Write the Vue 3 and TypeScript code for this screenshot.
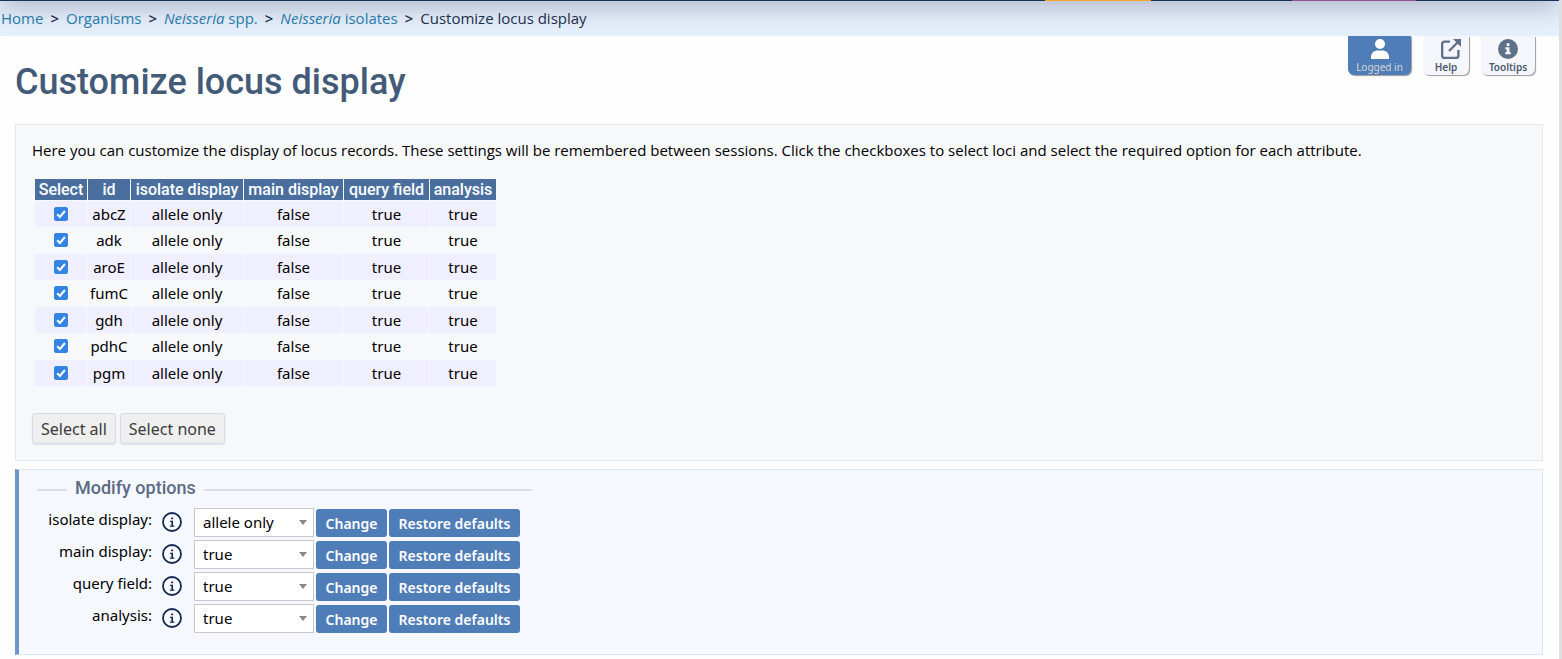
<script setup lang="ts">
import { reactive, ref } from 'vue'

interface Locus {
  id: string
  selected: boolean
}

interface DisplayOption {
  key: string
  label: string
  value: string
  choices: string[]
}

const columns = ['Select', 'id', 'isolate display', 'main display', 'query field', 'analysis']
const attributes = ['allele only', 'false', 'true', 'true']

const loci = ref<Locus[]>(
  ['abcZ', 'adk', 'aroE', 'fumC', 'gdh', 'pdhC', 'pgm'].map((id) => ({ id, selected: true })),
)

const options = reactive<DisplayOption[]>([
  { key: 'isolate_display', label: 'isolate display:', value: 'allele only', choices: ['allele only', 'sequence', 'hide'] },
  { key: 'main_display', label: 'main display:', value: 'true', choices: ['true', 'false'] },
  { key: 'query_field', label: 'query field:', value: 'true', choices: ['true', 'false'] },
  { key: 'analysis', label: 'analysis:', value: 'true', choices: ['true', 'false'] },
])

function selectAll(selected: boolean) {
  loci.value.forEach((locus) => (locus.selected = selected))
}
</script>

<template>
  <div class="page">
    <div class="menu-edge"></div>
    <nav class="breadcrumbs" aria-label="Breadcrumb">
      <a href="#">Home</a><span class="sep">&gt;</span>
      <a href="#">Organisms</a><span class="sep">&gt;</span>
      <a href="#"><i>Neisseria</i> spp.</a><span class="sep">&gt;</span>
      <a href="#"><i>Neisseria</i> isolates</a><span class="sep">&gt;</span>
      <span>Customize locus display</span>
    </nav>

    <header class="title-row">
      <h1>Customize locus display</h1>
      <div class="tools">
        <button type="button" class="tool tool-login">
          <svg viewBox="0 0 18 20" width="18" height="20">
            <circle cx="9" cy="5" r="5" fill="currentColor" />
            <path d="M0 20v-2c0-4 3-6.500 6.500-6.500h5c3.500 0 6.500 2.500 6.500 6.500v2z" fill="currentColor" />
          </svg>
          <span>Logged in</span>
        </button>
        <button type="button" class="tool tool-help">
          <svg viewBox="0 0 20 20" width="20" height="20" fill="none" stroke="currentColor" stroke-width="2.400">
            <path d="M9 2.600H3.600a2.500 2.500 0 0 0-2.500 2.500v11.300a2.500 2.500 0 0 0 2.500 2.500h11.300a2.500 2.500 0 0 0 2.500-2.500V11" />
            <path d="M8 12 17.500 2.500" />
            <path d="M12 0h8v8z" fill="currentColor" stroke="none" />
          </svg>
          <span>Help</span>
        </button>
        <button type="button" class="tool tool-tips">
          <svg viewBox="0 0 20 20" width="20" height="20">
            <circle cx="10" cy="10" r="10" fill="currentColor" />
            <path d="M8.600 4.200h2.900v2.700H8.600zM7.400 8.200h4.100v5h1.300v2H7.200v-2h1.400v-3H7.400z" fill="#f4f6fb" />
          </svg>
          <span>Tooltips</span>
        </button>
      </div>
    </header>

    <main>
      <section class="panel results">
        <p>
          Here you can customize the display of locus records. These settings will be remembered between sessions.
          Click the checkboxes to select loci and select the required option for each attribute.
        </p>
        <table>
          <thead>
            <tr>
              <th v-for="column in columns" :key="column" scope="col">{{ column }}</th>
            </tr>
          </thead>
          <tbody>
            <tr v-for="locus in loci" :key="locus.id">
              <td>
                <span class="check">
                  <input v-model="locus.selected" type="checkbox" :aria-label="locus.id" />
                  <svg v-if="locus.selected" viewBox="0 0 14 14" width="14" height="14" aria-hidden="true">
                    <path d="M3.200 7.200 5.900 9.900 10.900 4" fill="none" stroke="#fff" stroke-width="2" />
                  </svg>
                </span>
              </td>
              <td>{{ locus.id }}</td>
              <td v-for="(attribute, i) in attributes" :key="i">{{ attribute }}</td>
            </tr>
          </tbody>
        </table>
        <div class="selectors">
          <button type="button" @click="selectAll(true)">Select all</button>
          <button type="button" @click="selectAll(false)">Select none</button>
        </div>
      </section>

      <section class="panel modify">
        <fieldset>
          <legend>Modify options</legend>
          <div v-for="option in options" :key="option.key" class="option">
            <label :for="option.key">{{ option.label }}</label>
            <button type="button" class="info" :aria-label="`About ${option.label}`">
              <svg viewBox="0 0 20 20" width="20" height="20">
                <circle cx="10" cy="10" r="9" fill="none" stroke="currentColor" stroke-width="1.800" />
                <path d="M9.200 5.400h1.900v1.900H9.200zM8 8.800h3v4.800h1.300v1.100H7.900v-1.100h1.500V9.900H8z" fill="currentColor" />
              </svg>
            </button>
            <span class="dropdown">
              <select :id="option.key" v-model="option.value">
                <option v-for="choice in option.choices" :key="choice">{{ choice }}</option>
              </select>
              <svg viewBox="0 0 8 5" width="8" height="5" aria-hidden="true"><path d="M0 0h8L4 5z" fill="#888" /></svg>
            </span>
            <button type="button" class="action change">Change</button>
            <button type="button" class="action restore">Restore defaults</button>
          </div>
        </fieldset>
      </section>
    </main>
  </div>
</template>

<style>
body {
  margin: 0;
  background: #fefefe;
}
</style>

<style scoped>
.page {
  box-sizing: border-box;
  min-height: 100vh;
  border-right: 3px solid #dedede;
  color: #000;
  font: 15px/24px "Noto Sans", sans-serif;
}

button,
select {
  box-sizing: border-box;
  margin: 0;
  font-family: inherit;
  cursor: pointer;
}

.menu-edge {
  height: 1px;
  background: linear-gradient(
    to right,
    #17325c 67%,
    #f5a623 67% 73.8%,
    #17325c 73.8% 82.9%,
    #96509b 82.9% 90.8%,
    #17325c 90.8%
  );
}

.breadcrumbs {
  position: relative;
  z-index: 0;
  display: flex;
  height: 33px;
  padding: 0 0 2px 1px;
  align-items: center;
  overflow: hidden;
  background: #e6f0fc;
  color: #1c2f4c;
  font-family: "Open Sans", sans-serif;
  font-size: 15px;
  white-space: nowrap;
}

/* Shadow cast by the menu bar above */
.breadcrumbs::before {
  position: absolute;
  z-index: -1;
  top: -60px;
  right: 0;
  left: 0;
  height: 60px;
  box-shadow: 0 8px 24px rgb(40 40 70 / 26%);
  content: "";
}

.breadcrumbs a {
  color: #267aa9;
  text-decoration: none;
}

.sep {
  margin: 0 7px;
  font-weight: 600;
}

.title-row {
  display: flex;
  height: 88px;
  padding: 0 24px 0 15px;
  align-items: flex-start;
  justify-content: space-between;
}

h1 {
  margin: 22px 0 0;
  color: #435a78;
  font: 500 36px/48px Roboto, sans-serif;
}

.tools {
  display: flex;
  gap: 12px;
}

.tool {
  display: flex;
  height: 39px;
  padding: 3px 0 0;
  flex-direction: column;
  align-items: center;
  border: 0;
  border-radius: 0 0 6px 6px;
  background: #f4f6fb;
  box-shadow: 1px 1px 1px #999;
  color: #5f7089;
  font-size: 10px;
  line-height: 16px;
}

.tool svg {
  flex: none;
}

.tool span {
  color: #4a5870;
  font-weight: 600;
}

.tool-login {
  width: 63px;
  background: #4e7db8;
  color: #fff;
}

.tool-login span {
  color: #d5d5d5;
  font-weight: 400;
}

.tool-help {
  width: 46px;
}

.tool-help svg {
  margin-left: 10px;
}

.tool-tips {
  width: 54px;
}

main {
  display: flex;
  padding: 0 16px 0 15px;
  flex-direction: column;
  gap: 8px;
}

.panel {
  border: 1px solid #e3e8f0;
}

.results {
  padding: 14px 16px 16px;
  background: #f7f8fa;
}

.results p {
  margin: 0 0 17px;
  font-family: "Open Sans", sans-serif;
  line-height: 22px;
}

table {
  margin-left: 2px;
  border-spacing: 1px;
  text-align: center;
}

th {
  height: 21px;
  padding: 0;
  background: #4a6f9f;
  color: #fff;
  font: 500 16px/21px Roboto, sans-serif;
  white-space: nowrap;
}

th:nth-child(1) {
  width: 52px;
}

th:nth-child(2) {
  width: 42px;
}

th:nth-child(3) {
  width: 112px;
}

th:nth-child(4) {
  width: 99px;
}

th:nth-child(5) {
  width: 85px;
}

th:nth-child(6) {
  width: 66px;
}

td {
  height: 24px;
  padding: 1px 0;
}

tbody tr:nth-child(odd) td {
  background: #f0efff;
}

tbody tr:nth-child(even) td {
  padding-top: 0;
}

.check {
  display: grid;
  justify-content: center;
}

.check input,
.check svg {
  width: 14px;
  height: 14px;
  margin: 0;
  grid-area: 1 / 1;
}

.check input {
  appearance: none;
  border: 1px solid #3584e4;
  border-radius: 2px;
}

.check input:checked {
  background: #3584e4;
}

.check svg {
  pointer-events: none;
}

.selectors {
  display: flex;
  margin-top: 26px;
  gap: 4px;
}

.selectors button {
  height: 31px;
  padding: 0 8px;
  border: 1px solid #d5dbe7;
  border-radius: 3px;
  background: #efefef;
  box-shadow: 0 1px 2px #dfe3ea;
  color: #3b3b3b;
  font-size: 16px;
}

.modify {
  padding: 6px 18px 18px;
  border-color: #dbe6f0;
  border-left: 4px solid #7095cb;
  background: #f5f8fe;
}

fieldset {
  box-sizing: border-box;
  width: 495px;
  max-width: 100%;
  margin: 0;
  padding: 4px 0 0;
  border: 0;
  border-top: 2px solid #dedede;
}

legend {
  margin-left: 30px;
  padding: 0 8px 4px;
  color: #5c6a84;
  font: 500 18px/24px Roboto, sans-serif;
}

.option {
  display: grid;
  height: 32px;
  grid-template-columns: 115px 20px 120px 71px 131px;
  align-items: start;
}

.option label {
  line-height: 22px;
  text-align: right;
  white-space: nowrap;
}

.info {
  display: flex;
  width: 20px;
  margin: 4px 0 0 10px;
  padding: 0;
  border: 0;
  background: none;
  color: #14284f;
}

.dropdown {
  position: relative;
  margin-left: 22px;
  width: 120px;
}

.dropdown select {
  display: block;
  width: 100%;
  height: 29px;
  padding: 0 8px 2px;
  appearance: none;
  border: 1px solid #c8c8c8;
  border-radius: 0;
  background: #fff;
  color: #000;
  font-size: 15px;
}

.dropdown svg {
  position: absolute;
  top: 12px;
  right: 7px;
  pointer-events: none;
}

.action {
  height: 28px;
  margin-top: 1px;
  padding: 0;
  border: 0;
  border-radius: 3px;
  background: #4e7db8;
  color: #fff;
  font-size: 14px;
  font-weight: 600;
  white-space: nowrap;
}

.change {
  width: 71px;
  margin-left: 24px;
}

.restore {
  width: 131px;
  margin-left: 26px;
}
</style>
